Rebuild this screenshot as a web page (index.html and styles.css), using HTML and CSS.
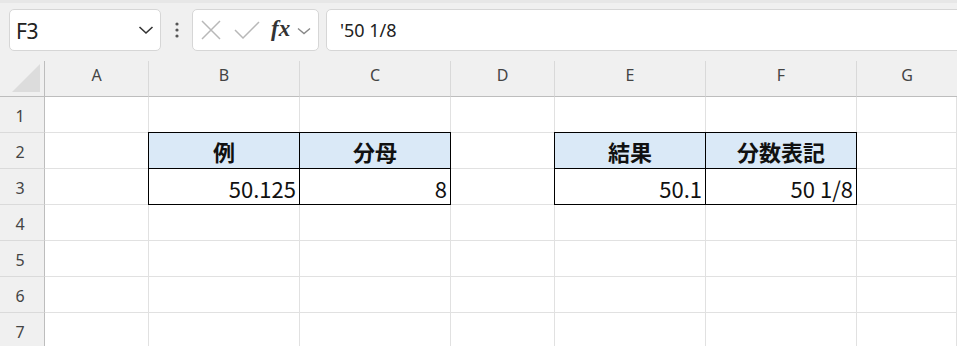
FILE: index.html
```
<!DOCTYPE html>
<html lang="ja">
<head>
<meta charset="utf-8">
<title>Sheet</title>
<link rel="stylesheet" href="styles.css">
</head>
<body>
<div class="toolbar">
  <div class="namebox">
    <span class="namebox-text">F3</span>
    <svg class="chev" width="16" height="10" viewBox="0 0 16 10"><path d="M1.5 2 L8 8 L14.5 2" fill="none" stroke="#333" stroke-width="1.6"/></svg>
  </div>
  <div class="dots">
    <svg width="6" height="16" viewBox="0 0 6 16"><circle cx="3" cy="2" r="1.6" fill="#555"/><circle cx="3" cy="8" r="1.6" fill="#555"/><circle cx="3" cy="14" r="1.6" fill="#555"/></svg>
  </div>
  <div class="fbuttons">
    <svg class="ico-x" width="20" height="20" viewBox="0 0 20 20"><path d="M1 1 L19 19 M19 1 L1 19" fill="none" stroke="#b8b8b8" stroke-width="1.5"/></svg>
    <svg class="ico-check" width="26" height="20" viewBox="0 0 26 20"><path d="M1 10 L9 18 L25 2" fill="none" stroke="#b8b8b8" stroke-width="1.5"/></svg>
    <span class="fx">fx</span>
    <svg class="chev-small" width="14" height="8" viewBox="0 0 14 8"><path d="M1 1.5 L7 6.5 L13 1.5" fill="none" stroke="#888" stroke-width="1.4"/></svg>
  </div>
  <div class="finput">'50 1/8</div>
</div>

<div class="sheet">
  <div class="corner"><svg width="30" height="30" viewBox="0 0 30 30"><path d="M29 1 L29 29 L1 29 Z" fill="#dcdcdc"/></svg></div>
  <div class="colhead">A</div>
  <div class="colhead">B</div>
  <div class="colhead">C</div>
  <div class="colhead">D</div>
  <div class="colhead">E</div>
  <div class="colhead">F</div>
  <div class="colhead last">G</div>

  <div class="rowhead">1</div>
  <div class="cell"></div><div class="cell"></div><div class="cell"></div><div class="cell"></div><div class="cell"></div><div class="cell"></div><div class="cell"></div>

  <div class="rowhead">2</div>
  <div class="cell"></div>
  <div class="cell th bl bt">例</div>
  <div class="cell th bt">分母</div>
  <div class="cell"></div>
  <div class="cell th bl bt">結果</div>
  <div class="cell th bt">分数表記</div>
  <div class="cell"></div>

  <div class="rowhead">3</div>
  <div class="cell"></div>
  <div class="cell num boxed bl">50.125</div>
  <div class="cell num boxed">8</div>
  <div class="cell"></div>
  <div class="cell num boxed bl">50.1</div>
  <div class="cell num boxed">50 1/8</div>
  <div class="cell"></div>

  <div class="rowhead">4</div>
  <div class="cell"></div><div class="cell"></div><div class="cell"></div><div class="cell"></div><div class="cell"></div><div class="cell"></div><div class="cell"></div>
  <div class="rowhead">5</div>
  <div class="cell"></div><div class="cell"></div><div class="cell"></div><div class="cell"></div><div class="cell"></div><div class="cell"></div><div class="cell"></div>
  <div class="rowhead">6</div>
  <div class="cell"></div><div class="cell"></div><div class="cell"></div><div class="cell"></div><div class="cell"></div><div class="cell"></div><div class="cell"></div>
  <div class="rowhead">7</div>
  <div class="cell"></div><div class="cell"></div><div class="cell"></div><div class="cell"></div><div class="cell"></div><div class="cell"></div><div class="cell"></div>
</div>
</body>
</html>
```

FILE: styles.css
```
* { box-sizing: border-box; }
html, body {
  margin: 0;
  padding: 0;
  width: 957px;
  height: 346px;
  overflow: hidden;
  background: #ffffff;
}
body {
  font-family: "Noto Sans", "Noto Sans CJK JP", sans-serif;
}

/* toolbar */
.toolbar {
  height: 61px;
  background: #f0f0f0;
  border-top: 3px solid #e7e7e7;
  padding-top: 6px;
  display: flex;
  align-items: flex-start;
}
.namebox {
  margin-left: 9px;
  width: 152px;
  height: 42px;
  background: #fff;
  border: 1px solid #d6d6d6;
  border-radius: 5px;
  display: flex;
  align-items: center;
  justify-content: space-between;
  padding: 0 6px 0 6px;
}
.namebox-text {
  font-family: "Noto Sans", sans-serif;
  font-size: 21px;
  color: #222;
  letter-spacing: -0.5px;
  margin-top: 2px;
}
.dots {
  width: 31px;
  height: 42px;
  display: flex;
  align-items: center;
  justify-content: center;
}
.fbuttons {
  width: 127px;
  height: 42px;
  background: #fff;
  border: 1px solid #d6d6d6;
  border-radius: 5px;
  display: flex;
  align-items: center;
  padding-left: 8px;
}
.ico-x { margin-right: 13px; }
.ico-check { margin-right: 11px; }
.fx {
  font-family: "Liberation Serif", serif;
  font-style: italic;
  font-weight: bold;
  font-size: 23px;
  color: #333;
  margin-right: 7px;
  margin-top: -2px;
}
.chev-small { margin-top: 1px; }
.finput {
  margin-left: 7px;
  flex: 1;
  margin-right: -12px;
  height: 42px;
  background: #fff;
  border: 1px solid #d6d6d6;
  border-radius: 5px;
  padding-left: 13px;
  display: flex;
  align-items: center;
  font-family: "Noto Sans", sans-serif;
  font-size: 18px;
  color: #222;
}

/* sheet */
.sheet {
  display: grid;
  grid-template-columns: 45px 104px 151px 151px 104px 151px 151px 1fr;
  grid-auto-rows: 36px;
}
.corner {
  background: #f0f0f0;
  border-right: 1px solid #bdbdbd;
  border-bottom: 1px solid #bdbdbd;
  display: flex;
  align-items: flex-end;
  justify-content: flex-end;
  padding: 0 3px 3px 0;
}
.colhead {
  background: #f0f0f0;
  border-right: 1px solid #d9d9d9;
  border-bottom: 1px solid #bdbdbd;
  display: flex;
  justify-content: center;
  align-items: center;
  font-family: "Noto Sans", sans-serif;
  font-size: 16px;
  color: #444;
  padding-bottom: 8px;
}
.colhead.last { border-right: none; }
.rowhead {
  background: #f0f0f0;
  border-right: 1px solid #bdbdbd;
  border-bottom: 1px solid #dadada;
  display: flex;
  justify-content: center;
  align-items: center;
  font-family: "Noto Sans", sans-serif;
  font-size: 16px;
  color: #444;
  padding-right: 4px;
  padding-top: 2px;
}
.cell {
  border-right: 1px solid #e1e1e1;
  border-bottom: 1px solid #e1e1e1;
  font-family: "Noto Sans CJK JP", sans-serif;
  font-size: 22px;
  line-height: 1;
  color: #111;
  display: flex;
  align-items: center;
}
.th {
  background: #dae9f7;
  border-right: 1px solid #000;
  border-bottom: 1px solid #000;
  justify-content: center;
  font-weight: bold;
  position: relative;
  padding-top: 1px;
}
.boxed {
  border-right: 1px solid #000;
  border-bottom: 1px solid #000;
  position: relative;
}
.num {
  justify-content: flex-end;
  padding-right: 3px;
  padding-top: 3px;
}
.bt { box-shadow: 0 -1px 0 #000; }
.bl { box-shadow: -1px 0 0 #000; }
.bl.bt { box-shadow: -1px 0 0 #000, 0 -1px 0 #000, -1px -1px 0 #000; }
```
